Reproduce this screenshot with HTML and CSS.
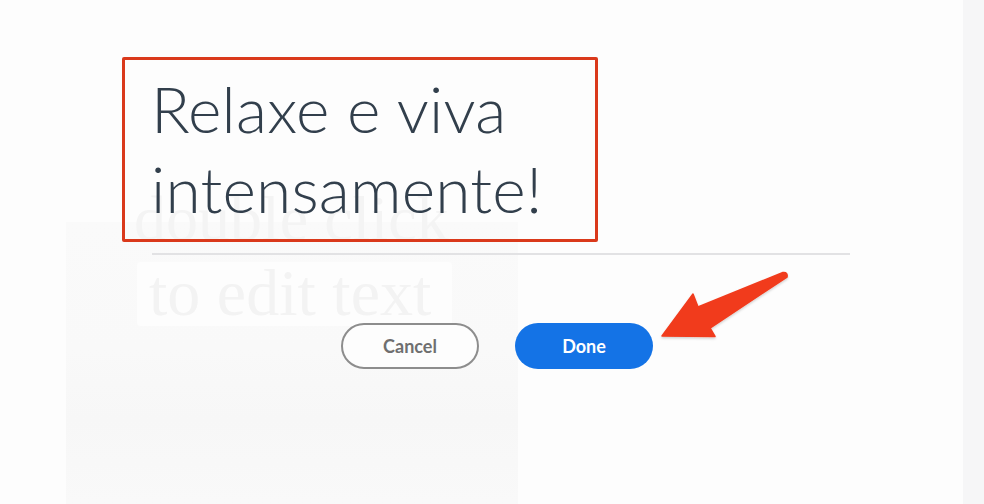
FILE: index.html
```html
<!DOCTYPE html>
<html lang="pt">
<head>
<meta charset="utf-8">
<title>Edit text</title>
<link rel="stylesheet" href="styles.css">
</head>
<body>
<div class="page">
  <main class="stage">
    <div class="ghost-layer" aria-hidden="true">
      <div class="ghost-photo"></div>
      <div class="ghost-line1">double click</div>
      <div class="ghost-box"><span>to edit text</span></div>
    </div>
    <div class="editor">
      <div class="editor-text">Relaxe e viva<br>intensamente!</div>
    </div>
    <div class="rule"></div>
    <div class="actions">
      <button class="btn btn-cancel">Cancel</button>
      <button class="btn btn-done">Done</button>
    </div>
    <svg class="arrow" viewBox="0 0 984 504" width="984" height="504" aria-hidden="true">
      <defs>
        <filter id="sh" x="-10%" y="-10%" width="130%" height="130%">
          <feDropShadow dx="0" dy="1.5" stdDeviation="1.2" flood-color="#000" flood-opacity="0.18"/>
        </filter>
      </defs>
      <path filter="url(#sh)" fill="#f13b1c" stroke="#f13b1c" stroke-width="1.5" stroke-linejoin="round"
        d="M662 336 L693 294 L698 307 L783 272.5 Q788 272 787 277 L710 328 L715 336.5 Z"/>
    </svg>
  </main>
  <aside class="strip"></aside>
</div>
</body>
</html>
```

FILE: styles.css
```css
html, body {
  margin: 0;
  padding: 0;
  background: #fdfdfd;
}

.page {
  display: flex;
  width: 984px;
  height: 504px;
  overflow: hidden;
}

.stage {
  position: relative;
  flex: 1;
  display: flex;
  flex-direction: column;
  align-items: flex-start;
}

.strip {
  width: 21px;
  background: #f6f6f7;
}

/* faint underlying canvas content */
.ghost-layer {
  position: absolute;
  inset: 0;
  z-index: 0;
}

.ghost-photo {
  position: absolute;
  left: 66px;
  top: 222px;
  width: 452px;
  height: 282px;
  background: linear-gradient(180deg, #fafafa 0%, #f9f9f9 45%, #f7f7f7 70%, #f9f9f9 100%);
}

.ghost-line1 {
  position: absolute;
  left: 134px;
  top: 184px;
  font-family: "Liberation Serif", serif;
  font-size: 64px;
  line-height: 70px;
  color: #f4f4f4;
  white-space: nowrap;
}

.ghost-box {
  position: absolute;
  left: 137px;
  top: 262px;
  width: 315px;
  height: 64px;
  background: #fdfdfd;
  border-radius: 4px;
}

.ghost-box span {
  display: block;
  padding-left: 12px;
  font-family: "Liberation Serif", serif;
  font-size: 66px;
  line-height: 62px;
  color: #f3f3f3;
  white-space: nowrap;
}

.editor {
  position: relative;
  z-index: 1;
  margin: 57px 0 0 122px;
  width: 476px;
  height: 185px;
  box-sizing: border-box;
  border: 3px solid #da391b;
  border-radius: 2px;
  padding: 9px 0 0 26px;
}

.editor-text {
  font-family: Lato, "Open Sans", sans-serif;
  font-weight: 300;
  font-size: 64px;
  line-height: 80px;
  letter-spacing: 0.2px;
  color: #323f4c;
  white-space: nowrap;
}

.rule {
  position: relative;
  z-index: 1;
  margin: 11px 0 0 152px;
  width: 698px;
  height: 2px;
  background: #e2e2e4;
}

.actions {
  position: relative;
  z-index: 1;
  display: flex;
  gap: 36px;
  margin: 68px 0 0 341px;
}

.btn {
  width: 138px;
  height: 46px;
  border-radius: 23px;
  box-sizing: border-box;
  font-family: Lato, "Open Sans", sans-serif;
  font-weight: 700;
  font-size: 18px;
  padding: 0;
}

.btn-cancel {
  background: #fdfdfd;
  border: 2px solid #8d8d8d;
  color: #6f6f6f;
}

.btn-done {
  background: #1473e6;
  border: none;
  color: #ffffff;
}

.arrow {
  position: absolute;
  left: 0;
  top: 0;
  z-index: 2;
  pointer-events: none;
}
```
